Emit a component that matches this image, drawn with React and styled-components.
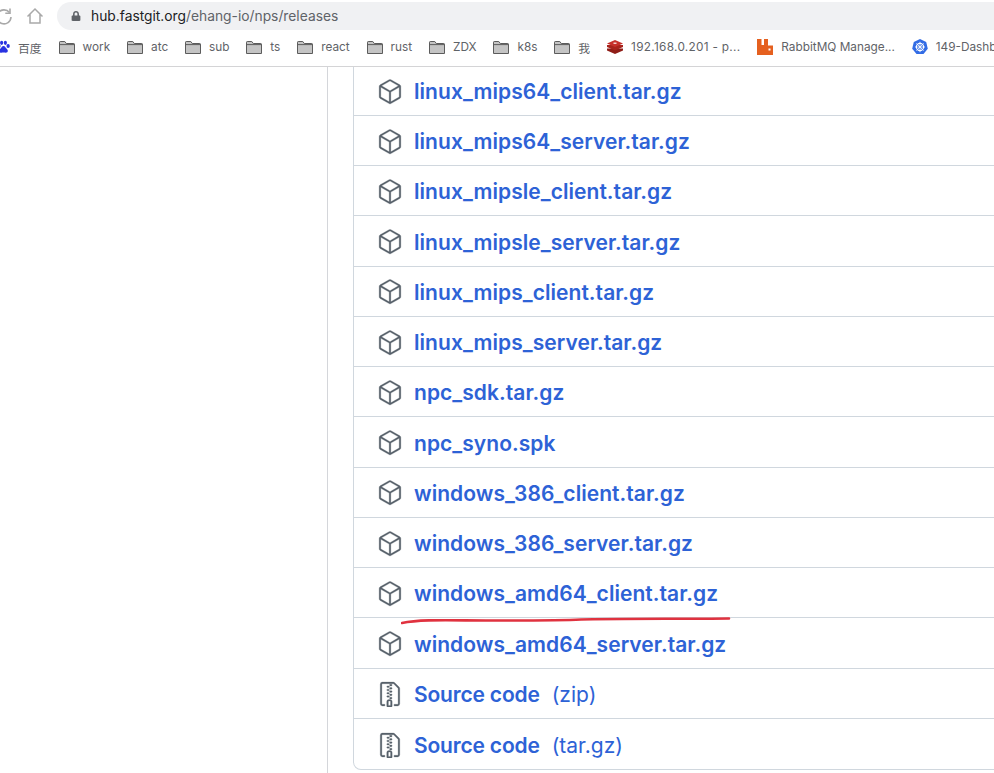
import styled, { createGlobalStyle } from "styled-components";
import { GoPackage, GoFileZip } from "react-icons/go";
import { FaLock } from "react-icons/fa";

const GlobalStyle = createGlobalStyle`
  html, body {
    margin: 0;
    height: 100%;
    overflow: hidden;
    background: #fff;
  }
  #root { height: 100%; }
`;

const assets = [
  { name: "linux_mips64_client.tar.gz" },
  { name: "linux_mips64_server.tar.gz" },
  { name: "linux_mipsle_client.tar.gz" },
  { name: "linux_mipsle_server.tar.gz" },
  { name: "linux_mips_client.tar.gz" },
  { name: "linux_mips_server.tar.gz" },
  { name: "npc_sdk.tar.gz" },
  { name: "npc_syno.spk" },
  { name: "windows_386_client.tar.gz" },
  { name: "windows_386_server.tar.gz" },
  { name: "windows_amd64_client.tar.gz" },
  { name: "windows_amd64_server.tar.gz" },
  { name: "Source code", kind: "(zip)", zip: true },
  { name: "Source code", kind: "(tar.gz)", zip: true },
];

const folders = ["work", "atc", "sub", "ts", "react", "rust", "ZDX", "k8s", "我"];

const FolderIcon = () => (
  <svg width="16" height="13" viewBox="0 0 16 13">
    <path d="M.5 12.5V1.2c0-.4.3-.7.7-.7h4.6l1.5 2h7.5c.4 0 .7.3.7.7v9.3z" fill="#c4c4c4" stroke="#5c5c5c" />
    <path d="M.5 3.6h15" stroke="#5c5c5c" />
  </svg>
);

const BaiduIcon = () => (
  <svg width="13" height="14" viewBox="0 0 14 14" fill="#2932e1">
    <ellipse cx="2" cy="6" rx="1.8" ry="2.2" />
    <ellipse cx="5" cy="2.5" rx="1.7" ry="2.3" />
    <ellipse cx="9" cy="2.5" rx="1.7" ry="2.3" />
    <ellipse cx="12" cy="6" rx="1.8" ry="2.2" />
    <path d="M7 6c-1.6 0-2 1.6-3.2 2.6C2.4 9.700 2 11 2.600 12.200c.8 1.400 2.700.8 4.400.8s3.600.6 4.400-.8c.6-1.200.2-2.500-1.200-3.600C9 7.600 8.600 6 7 6z" />
  </svg>
);

const RedisIcon = () => (
  <svg width="16" height="14" viewBox="0 0 16 14">
    <path d="M0 10.500 8 14l8-3.500V8.500H0z" fill="#8f1d17" />
    <path d="M0 7 8 10.500 16 7V5H0z" fill="#a8231c" />
    <path d="M0 3.500 8 7l8-3.500L8 0z" fill="#c6302b" />
    <path d="M6.500 2.500h3v1.500h-3z" fill="#f3d0cd" />
  </svg>
);

const RabbitIcon = () => (
  <svg width="16" height="16" viewBox="0 0 16 16">
    <path d="M0 0h4.500v6H7V0h4v6.500h5V16H0z" fill="#e5601f" />
    <rect x="11.500" y="9.500" width="2" height="2" fill="#fff" />
  </svg>
);

const KubeIcon = () => (
  <svg width="16" height="16" viewBox="0 0 16 16">
    <path d="M8 0l6.200 3 1.600 6.700L11.500 15h-7L.2 9.700 1.800 3z" fill="#326ce5" />
    <circle cx="8" cy="8" r="3.600" fill="none" stroke="#fff" strokeWidth="1.100" />
    <path d="M8 2.800v10.400M3 8h10M4.400 4.400l7.200 7.200M11.600 4.400l-7.200 7.200" stroke="#fff" strokeWidth=".8" />
  </svg>
);

const App = () => {
  return (
    <Page>
      <GlobalStyle />
      <Chrome>
        <Toolbar>
          <NavButton>
            <svg width="18" height="18" viewBox="0 0 18 18" fill="none" stroke="#a9a9a9" strokeWidth="1.600">
              <path d="M14.500 5.500A7 7 0 1 0 16 10" />
              <path d="M15 1.500v4.700h-4.700" />
            </svg>
          </NavButton>
          <NavButton>
            <svg width="18" height="18" viewBox="0 0 18 18" fill="none" stroke="#a9a9a9" strokeWidth="1.500">
              <path d="M1.500 9.500 9 2l7.500 7.500M4 7.500V16h10V7.500" />
            </svg>
          </NavButton>
          <AddressBar>
            <FaLock size={10} color="#5f6368" />
            <Url>
              <b>hub.fastgit.org</b>/ehang-io/nps/releases
            </Url>
          </AddressBar>
        </Toolbar>
        <Bookmarks>
          <Bookmark><BaiduIcon />百度</Bookmark>
          {folders.map((f) => (
            <Bookmark key={f}><FolderIcon />{f}</Bookmark>
          ))}
          <Bookmark $spaced><RedisIcon />192.168.0.201 - p...</Bookmark>
          <Bookmark><RabbitIcon />RabbitMQ Manage...</Bookmark>
          <Bookmark><KubeIcon />149-Dashboard</Bookmark>
        </Bookmarks>
      </Chrome>
      <Content>
        <Sidebar />
        <Main>
          <AssetList>
            {assets.map((a, i) => (
              <AssetRow key={i}>
                <IconSlot>
                  {a.zip ? <GoFileZip size={26} /> : <GoPackage size={26} />}
                </IconSlot>
                <AssetName $tight={a.zip}>{a.name}</AssetName>
                {a.kind && <AssetKind>{a.kind}</AssetKind>}
              </AssetRow>
            ))}
          </AssetList>
          <RedLine width="340" height="10" viewBox="0 0 340 10">
            <path d="M1 8C20 4 50 5.500 90 5.500c40 0 70 0 90-1 30-1 100-.5 148-1" fill="none" stroke="#e0323f" strokeWidth="2.600" strokeLinecap="round" />
          </RedLine>
        </Main>
      </Content>
    </Page>
  );
};

const Page = styled.div`
  height: 100%;
  display: flex;
  flex-direction: column;
  font-family: Inter, "Noto Sans CJK SC", sans-serif;
`;

const Chrome = styled.header`
  height: 67px;
  box-sizing: border-box;
  border-bottom: 1px solid #d4d4d6;
  background: #fff;
  flex-shrink: 0;
  overflow: hidden;
`;

const Toolbar = styled.div`
  height: 32px;
  display: flex;
  align-items: center;
  gap: 5px;
  margin-left: -9px;
`;

const NavButton = styled.div`
  width: 26px;
  height: 26px;
  display: flex;
  align-items: center;
  justify-content: center;
`;

const AddressBar = styled.div`
  flex: 1;
  height: 28px;
  margin-left: 4px;
  padding-left: 14px;
  display: flex;
  align-items: center;
  gap: 10px;
  background: #f0f1f3;
  border-radius: 14px 0 0 14px;
`;

const Url = styled.span`
  font-size: 13.8px;
  color: #5f6368;
  b {
    font-weight: 400;
    color: #202124;
  }
`;

const Bookmarks = styled.nav`
  height: 30px;
  display: flex;
  align-items: center;
  gap: 16.9px;
  margin-left: -3px;
  white-space: nowrap;
`;

const Bookmark = styled.div`
  display: flex;
  align-items: center;
  gap: 8px;
  font-size: 11.8px;
  letter-spacing: ${(p) => (p.$spaced ? "0.3px" : "0")};
  color: #5f6368;
`;

const Content = styled.main`
  flex: 1;
  display: flex;
  min-height: 0;
`;

const Sidebar = styled.aside`
  width: 327px;
  flex-shrink: 0;
  border-right: 1px solid #d4d6da;
`;

const Main = styled.section`
  flex: 1;
  position: relative;
  padding-left: 25px;
`;

const AssetList = styled.ul`
  list-style: none;
  margin: 0 -12px 0 0;
  padding: 0;
  border: 1px solid #d0d7de;
  border-top: none;
  border-radius: 0 0 8px 8px;
`;

const AssetRow = styled.li`
  height: 50.25px;
  box-sizing: border-box;
  display: flex;
  align-items: center;
  padding: 2px 0 0 23px;
  border-top: 1px solid #d0d7de;
  &:first-child {
    height: 47.9px;
    border-top: none;
  }
  &:last-child {
    height: 51.5px;
  }
`;

const IconSlot = styled.span`
  width: 37px;
  display: flex;
  align-items: center;
  color: #57606a;
  svg {
    stroke: currentColor;
    stroke-width: 0.25px;
  }
`;

const AssetName = styled.a`
  font-size: 21px;
  font-weight: 600;
  letter-spacing: ${(p) => (p.$tight ? "-0.18px" : "0.05px")};
  color: #2d62d6;
`;

const AssetKind = styled.span`
  margin-left: 12px;
  font-size: 21px;
  color: #2d62d6;
`;

const RedLine = styled.svg`
  position: absolute;
  left: 73px;
  top: 548px;
`;

export default App;
